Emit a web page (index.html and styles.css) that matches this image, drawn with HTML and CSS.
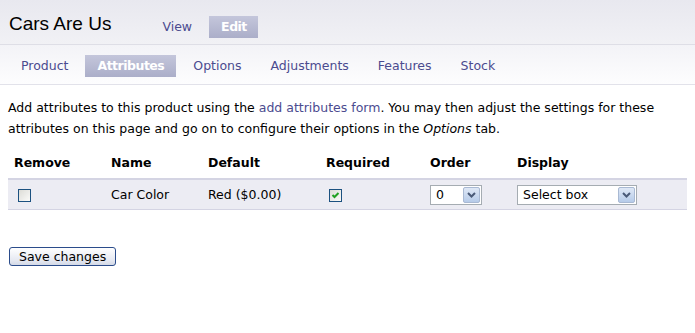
FILE: index.html
```html
<!DOCTYPE html>
<html lang="en">
<head>
  <meta charset="UTF-8">
  <title>Cars Are Us | Attributes</title>
  <link rel="stylesheet" href="styles.css">
</head>
<body>
  <header class="site-header">
    <h1>Cars Are Us</h1>
    <nav class="primary-tabs">
      <a href="#">View</a>
      <a href="#" class="active">Edit</a>
    </nav>
  </header>
  <nav class="secondary-tabs">
    <a href="#">Product</a>
    <a href="#" class="active">Attributes</a>
    <a href="#">Options</a>
    <a href="#">Adjustments</a>
    <a href="#">Features</a>
    <a href="#">Stock</a>
  </nav>

  <div class="content">
    <p class="intro">Add attributes to this product using the <a href="#">add attributes form</a>. You may then adjust the settings for these attributes on this page and go on to configure their options in the <em>Options</em> tab.</p>

    <form>
      <table class="attributes">
        <thead>
          <tr>
            <th class="col-remove">Remove</th>
            <th class="col-name">Name</th>
            <th class="col-default">Default</th>
            <th class="col-required">Required</th>
            <th class="col-order">Order</th>
            <th>Display</th>
          </tr>
        </thead>
        <tbody>
          <tr>
            <td><input type="checkbox" class="box remove-box"></td>
            <td>Car Color</td>
            <td>Red ($0.00)</td>
            <td><input type="checkbox" class="box required-box" checked></td>
            <td>
              <span class="select-wrap order">
                <select><option>0</option><option>1</option><option>2</option></select>
                <span class="arrow"><svg width="9" height="6" viewBox="0 0 9 6"><path d="M1 1 L4.5 4.5 L8 1" fill="none" stroke="#4a5a78" stroke-width="2"/></svg></span>
              </span>
            </td>
            <td>
              <span class="select-wrap display">
                <select><option>Select box</option><option>Radio buttons</option></select>
                <span class="arrow"><svg width="9" height="6" viewBox="0 0 9 6"><path d="M1 1 L4.5 4.5 L8 1" fill="none" stroke="#4a5a78" stroke-width="2"/></svg></span>
              </span>
            </td>
          </tr>
        </tbody>
      </table>

      <button type="submit" class="save">Save changes</button>
    </form>
  </div>
</body>
</html>
```
FILE: styles.css
```css
body {
  margin: 0;
  font-family: "DejaVu Sans", Verdana, sans-serif;
  font-size: 12.5px;
  color: #000;
  background: #fff;
}
a {
  color: #4b4b8f;
  text-decoration: none;
}
.site-header {
  display: flex;
  align-items: center;
  height: 44px;
  padding: 0 9px;
  background: linear-gradient(#e8e8ef, #f1f1f5);
  border-bottom: 1px solid #dedee6;
}
.site-header h1 {
  margin: 0 51px 0 0;
  font-family: "Liberation Sans", Arial, sans-serif;
  font-size: 19px;
  font-weight: normal;
  padding-top: 3px;
}
.primary-tabs {
  display: flex;
  gap: 17px;
  align-items: center;
  padding-top: 10px;
}
.primary-tabs a,
.secondary-tabs a {
  display: block;
  height: 22px;
  line-height: 22px;
}
.primary-tabs a.active,
.secondary-tabs a.active {
  background: linear-gradient(#c4c6db, #abaec9);
  color: #fff;
  font-weight: bold;
  letter-spacing: -0.5px;
}
.primary-tabs a.active {
  padding: 0 11px 0 12px;
}
.secondary-tabs {
  display: flex;
  gap: 29px;
  padding: 10px 21px 7px;
  background: linear-gradient(#f3f3f7, #fdfdfe);
  border-bottom: 1px solid #e2e2ea;
}
.secondary-tabs a.active {
  margin: 0 -12px;
  padding: 0 12px;
}
.content {
  padding: 0 8px;
}
.intro {
  margin: 12px 0 9px;
  line-height: 21px;
}
.attributes {
  width: 100%;
  border-collapse: collapse;
}
.attributes th {
  text-align: left;
  font-weight: bold;
  padding: 7px 6px 8px;
  border-bottom: 2px solid #d4d4e3;
}
.attributes td {
  background: #ececf3;
  height: 29px;
  padding: 0 6px;
  border-bottom: 1px solid #d4d4e3;
}
.col-remove { width: 85px; }
.col-name { width: 85px; }
.col-default { width: 106px; }
.col-required { width: 92px; }
.col-order { width: 75px; }
.box {
  appearance: none;
  width: 13px;
  height: 13px;
  margin: 0 0 0 4px;
  vertical-align: middle;
  border: 1px solid #1c5180;
  background: linear-gradient(135deg, #dcdcd7, #fbfbf9);
}
.required-box {
  margin-left: 3px;
}
.box:checked {
  background: url("data:image/svg+xml;utf8,<svg xmlns='http://www.w3.org/2000/svg' width='11' height='11'><path d='M2.5 5 L4.5 7 L8.5 3' fill='none' stroke='%2321a121' stroke-width='2'/></svg>") center no-repeat, linear-gradient(135deg, #dcdcd7, #fbfbf9);
}
.select-wrap {
  position: relative;
  display: inline-block;
  vertical-align: middle;
}
.select-wrap select {
  appearance: none;
  font-family: inherit;
  font-size: 12.5px;
  height: 20px;
  padding: 0 0 0 5px;
  border: 1px solid #a5acb2;
  background: #fff;
  color: #000;
}
.order select { width: 52px; }
.display select { width: 120px; }
.select-wrap .arrow {
  position: absolute;
  top: 2px;
  right: 2px;
  width: 15px;
  height: 14px;
  border: 1px solid #a9b9d3;
  border-radius: 2px;
  background: linear-gradient(#dfe8f6, #b6cbe9);
  display: flex;
  align-items: center;
  justify-content: center;
  pointer-events: none;
}
.save {
  margin-top: 37px;
  margin-left: 1px;
  font-family: inherit;
  font-size: 12.5px;
  height: 19px;
  padding: 0 9px;
  border: 1px solid #2b4c8b;
  border-radius: 3px;
  background: linear-gradient(#ffffff, #e6e9f2 70%, #d4d9e6);
  color: #000;
}
```
